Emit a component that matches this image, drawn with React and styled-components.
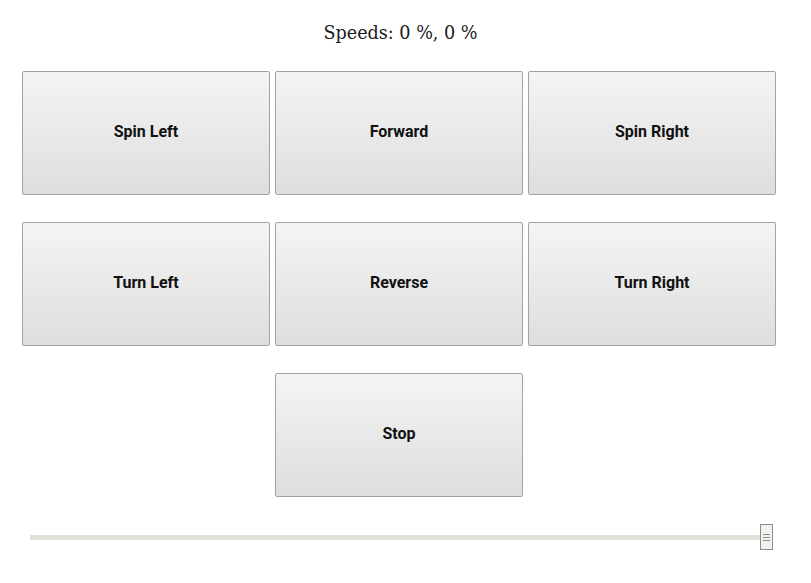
import React, { useState } from "react"
import styled, { createGlobalStyle } from "styled-components"

const GlobalStyle = createGlobalStyle`
  html, body {
    margin: 0;
    padding: 0;
    background: #fff;
  }
`

const buttons = [
  ["Spin Left", "Forward", "Spin Right"],
  ["Turn Left", "Reverse", "Turn Right"],
  [null, "Stop", null],
]

export default function App() {
  const [speed] = useState([0, 0])

  return (
    <Page>
      <GlobalStyle />
      <Title>
        Speeds: {speed[0]} %, {speed[1]} %
      </Title>
      <Pad>
        {buttons.flat().map((label, i) =>
          label ? <DriveButton key={i}>{label}</DriveButton> : <Blank key={i} />
        )}
      </Pad>
      <SliderRow>
        <Track>
          <Thumb>
            <Grip />
            <Grip />
            <Grip />
          </Thumb>
        </Track>
      </SliderRow>
    </Page>
  )
}

const Page = styled.div`
  width: 811px;
  height: 583px;
  display: flex;
  flex-direction: column;
`

const Title = styled.h1`
  margin: 20px 0 0 0;
  height: 26px;
  font-family: "DejaVu Serif", serif;
  font-weight: normal;
  font-size: 17.6px;
  line-height: 26px;
  color: #1a1a1a;
  text-align: center;
  padding-right: 10px;
`

const Pad = styled.div`
  margin: 25px 0 0 22px;
  display: grid;
  grid-template-columns: repeat(3, 248px);
  grid-auto-rows: 124px;
  column-gap: 5px;
  row-gap: 27px;
`

const DriveButton = styled.button`
  box-sizing: border-box;
  border: 1px solid #a2a2a2;
  border-radius: 2px;
  background: linear-gradient(to bottom, #f4f4f4, #dedede);
  font-family: Roboto, "Liberation Sans", sans-serif;
  font-weight: bold;
  font-size: 16px;
  color: #111;
  cursor: pointer;
  padding: 0 0 4px 0;
`

const Blank = styled.div``

const SliderRow = styled.div`
  margin: 38px 0 0 30px;
  width: 743px;
`

const Track = styled.div`
  position: relative;
  height: 5px;
  background: #e3dfda;
`

const Thumb = styled.div`
  position: absolute;
  right: 0;
  top: -11px;
  width: 11px;
  height: 24px;
  box-sizing: content-box;
  border: 1px solid #8e8a85;
  background: #f3f1ee;
  display: flex;
  flex-direction: column;
  justify-content: center;
  align-items: center;
  gap: 2px;
`

const Grip = styled.span`
  width: 7px;
  height: 1px;
  background: #8e8a85;
`
